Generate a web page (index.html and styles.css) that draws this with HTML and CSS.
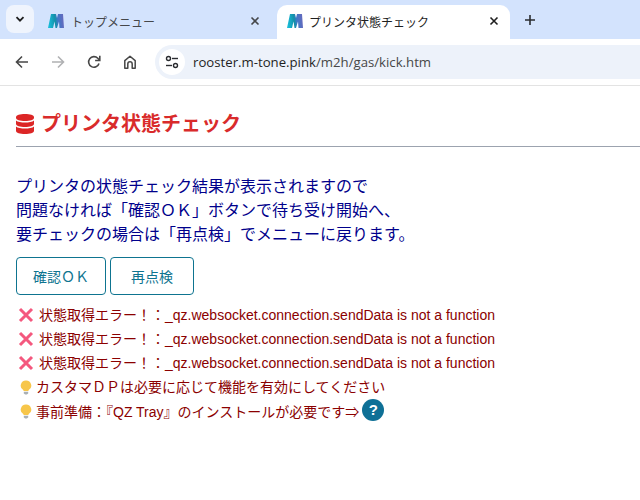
FILE: index.html
```html
<!DOCTYPE html>
<html lang="ja">
<head>
<meta charset="utf-8">
<title>プリンタ状態チェック</title>
<link rel="stylesheet" href="styles.css">
</head>
<body>
<header class="browser">
  <div class="tabstrip">
    <div class="tabsearch"><svg width="12" height="12" viewBox="0 0 12 12"><path d="M2.500 4.200 6 7.700 9.500 4.200" fill="none" stroke="#1f1f1f" stroke-width="1.800"/></svg></div>
    <div class="tab">
      <svg class="favicon" width="16" height="16" viewBox="0 0 16 16"><use href="#mlogo"/></svg>
      <span class="tabtitle muted">トップメニュー</span>
      <svg class="close" width="10" height="10" viewBox="0 0 10 10"><path d="M1.500 1.500 8.500 8.500M8.500 1.500 1.500 8.500" stroke="#45474a" stroke-width="1.600"/></svg>
    </div>
    <div class="tab active">
      <svg class="favicon" width="16" height="16" viewBox="0 0 16 16">
        <defs>
          <linearGradient id="mg" x1="0" x2="1" y1=".2" y2=".1"><stop offset="0" stop-color="#18bcd8"/><stop offset=".42" stop-color="#1490a8"/><stop offset=".58" stop-color="#3f78c8"/><stop offset="1" stop-color="#6c68bc"/></linearGradient>
          <path id="mlogo" d="M3 1H8L9 5 10 1H15L16 15H11.500L11 8.500 9 15H7.500L6.500 8.500 5 15H0Z" fill="url(#mg)"/>
        </defs>
        <use href="#mlogo"/>
      </svg>
      <span class="tabtitle">プリンタ状態チェック</span>
      <svg class="close" width="10" height="10" viewBox="0 0 10 10"><path d="M1.500 1.500 8.500 8.500M8.500 1.500 1.500 8.500" stroke="#1f1f1f" stroke-width="1.600"/></svg>
    </div>
    <svg class="newtab" width="12" height="12" viewBox="0 0 12 12"><path d="M6 1V11M1 6H11" stroke="#2a2c30" stroke-width="1.600"/></svg>
  </div>
  <div class="toolbar">
    <svg class="navicon" width="16" height="16" viewBox="0 0 16 16"><path d="M14 8H3M8 2.500 2.500 8 8 13.500" fill="none" stroke="#474747" stroke-width="1.600"/></svg>
    <svg class="navicon" width="16" height="16" viewBox="0 0 16 16"><path d="M2 8H13M8 2.500 13.500 8 8 13.500" fill="none" stroke="#b0b1b3" stroke-width="1.600"/></svg>
    <svg class="navicon" width="16" height="16" viewBox="0 0 16 16"><path d="M13 9.500A5.300 5.300 0 1 1 11.800 4.300L13.300 6" fill="none" stroke="#474747" stroke-width="1.600"/><path d="M13.800 1.800V6.500H9.100" fill="none" stroke="#474747" stroke-width="1.600"/></svg>
    <svg class="navicon" width="16" height="16" viewBox="0 0 16 16"><path d="M2.800 14.200V6.600L8 2.200 13.200 6.600V14.200H10.200V10A2.200 2.200 0 0 0 5.800 10V14.200Z" fill="none" stroke="#474747" stroke-width="1.500" stroke-linejoin="round"/></svg>
    <div class="omnibox">
      <div class="siteinfo"><svg width="16" height="16" viewBox="0 0 16 16"><g fill="none" stroke="#2a2c30" stroke-width="1.400"><circle cx="4.500" cy="4.500" r="2"/><path d="M8 4.500H14"/><circle cx="11.500" cy="11.500" r="2"/><path d="M2 11.500H8"/></g></svg></div>
      <span class="url">rooster.m-tone.pink<span class="urlpath">/m2h/gas/kick.htm</span></span>
    </div>
  </div>
</header>
<main class="page">
  <h1 class="title">
    <svg class="dbicon" width="18" height="20" viewBox="0 0 18 20"><g fill="#dc2626"><path d="M9 0C4 0 0 1.300 0 3V4C0 5.700 4 7 9 7S18 5.700 18 4V3C18 1.300 14 0 9 0Z"/><path d="M0 6.500V10C0 11.700 4 13 9 13S18 11.700 18 10V6.500C16.500 7.900 12.500 8.500 9 8.500S1.500 7.900 0 6.500Z"/><path d="M0 12.500V17C0 18.700 4 20 9 20S18 18.700 18 17V12.500C16.500 13.900 12.500 14.500 9 14.500S1.500 13.900 0 12.500Z"/></g></svg>
    <span>プリンタ状態チェック</span>
  </h1>
  <p class="lead">プリンタの状態チェック結果が表示されますので<br>問題なければ「確認ＯＫ」ボタンで待ち受け開始へ、<br>要チェックの場合は「再点検」でメニューに戻ります。</p>
  <div class="actions">
    <button class="btn">確認ＯＫ</button>
    <button class="btn btn-wide">再点検</button>
  </div>
  <ul class="log">
    <li><svg class="x" width="16" height="16" viewBox="0 0 16 16"><path d="M2 2 14 14M14 2 2 14" stroke="#f4587e" stroke-width="3"/></svg>状態取得エラー！：_qz.websocket.connection.sendData is not a function</li>
    <li><svg class="x" width="16" height="16" viewBox="0 0 16 16"><path d="M2 2 14 14M14 2 2 14" stroke="#f4587e" stroke-width="3"/></svg>状態取得エラー！：_qz.websocket.connection.sendData is not a function</li>
    <li><svg class="x" width="16" height="16" viewBox="0 0 16 16"><path d="M2 2 14 14M14 2 2 14" stroke="#f4587e" stroke-width="3"/></svg>状態取得エラー！：_qz.websocket.connection.sendData is not a function</li>
    <li><svg class="bulb" width="12" height="15" viewBox="0 0 12 15"><path d="M6 .5A5.200 5.200 0 0 0 3.500 10.300V11H8.500V10.300A5.200 5.200 0 0 0 6 .5Z" fill="#f7c64a"/><path d="M3.800 11.800H8.200V13.500L6.800 14.500H5.200L3.800 13.500Z" fill="#a9b0b5"/></svg>カスタマＤＰは必要に応じて機能を有効にしてください</li>
    <li><svg class="bulb" width="12" height="15" viewBox="0 0 12 15"><path d="M6 .5A5.200 5.200 0 0 0 3.500 10.300V11H8.500V10.300A5.200 5.200 0 0 0 6 .5Z" fill="#f7c64a"/><path d="M3.800 11.800H8.200V13.500L6.800 14.500H5.200L3.800 13.500Z" fill="#a9b0b5"/></svg>事前準備：『QZ Tray』のインストールが必要です⇒<span class="help">?</span></li>
  </ul>
</main>
</body>
</html>
```
FILE: styles.css
```css
* { box-sizing: border-box; }
html, body { margin: 0; padding: 0; }
body {
  width: 640px;
  height: 500px;
  overflow: hidden;
  background: #fff;
  font-family: "Liberation Sans", "Noto Sans CJK JP", sans-serif;
}
.browser { display: flex; flex-direction: column; }
.tabstrip {
  height: 39px;
  background: #d3e3fd;
  display: flex;
  align-items: flex-end;
  padding-left: 6px;
}
.tabsearch {
  width: 28px;
  height: 28px;
  margin-bottom: 6px;
  border-radius: 8px;
  background: #eff4fd;
  display: flex;
  align-items: center;
  justify-content: center;
}
.tab {
  height: 34px;
  width: 243px;
  display: flex;
  align-items: center;
  padding: 0 15px 2px 14px;
  font-size: 12px;
  color: #1f1f1f;
}
.tab.active {
  width: 233px;
  padding: 0 9px 2px 10px;
  background: #fff;
  border-radius: 10px 10px 0 0;
}
.favicon { flex: none; margin-right: 7px; }
.active .favicon { margin-right: 6px; }
.tabtitle { flex: 1; white-space: nowrap; overflow: hidden; }
.tabtitle.muted { color: #45474a; }
.close { flex: none; margin-right: 2px; }
.newtab { align-self: center; margin-left: 14px; }
.toolbar {
  height: 47px;
  background: #fff;
  border-bottom: 1px solid #e3e3e3;
  display: flex;
  align-items: center;
  padding-left: 14px;
}
.navicon { flex: none; margin-right: 20px; }
.omnibox {
  flex: 1;
  height: 34px;
  margin-left: -3px;
  background: #edf2fa;
  border-radius: 17px 0 0 17px;
  display: flex;
  align-items: center;
  padding-left: 4px;
  font-family: "Open Sans", sans-serif;
  font-size: 13.2px;
}
.siteinfo {
  width: 26px;
  height: 26px;
  border-radius: 50%;
  background: #fff;
  display: flex;
  align-items: center;
  justify-content: center;
  margin-right: 8px;
}
.url { color: #1f1f1f; }
.urlpath { color: #474747; }
.page { padding: 26px 0 0 16px; }
.title {
  margin: 0;
  height: 35px;
  border-bottom: 1px solid #9ca3af;
  display: flex;
  align-items: flex-start;
  gap: 7px;
  font-size: 20px;
  line-height: 24px;
  font-weight: 700;
  color: #d92b2b;
}
.dbicon { margin-top: 2px; }
.lead {
  margin: 28px 0 0;
  font-size: 16px;
  line-height: 24px;
  color: #00008b;
}
.actions { display: flex; gap: 4px; margin-top: 10px; }
.btn {
  height: 38px;
  padding: 0 16px;
  background: #fff;
  border: 1px solid #0e7490;
  border-radius: 4px;
  color: #0e7490;
  font: inherit;
  font-size: 14px;
}
.btn-wide { padding: 0 20px; }
.log {
  list-style: none;
  margin: 8px 0 0;
  padding: 0;
  font-size: 14px;
  line-height: 24px;
  color: #8b0000;
}
.log li { display: flex; align-items: center; white-space: nowrap; }
.x { margin: 0 5px 0 2px; flex: none; }
.bulb { margin: 0 4px 0 4px; flex: none; }
.help {
  width: 22px;
  height: 22px;
  margin: 0 0 3px 3px;
  border-radius: 50%;
  background: #0e7096;
  color: #fff;
  font-size: 15px;
  font-weight: 700;
  line-height: 22px;
  text-align: center;
}
```
